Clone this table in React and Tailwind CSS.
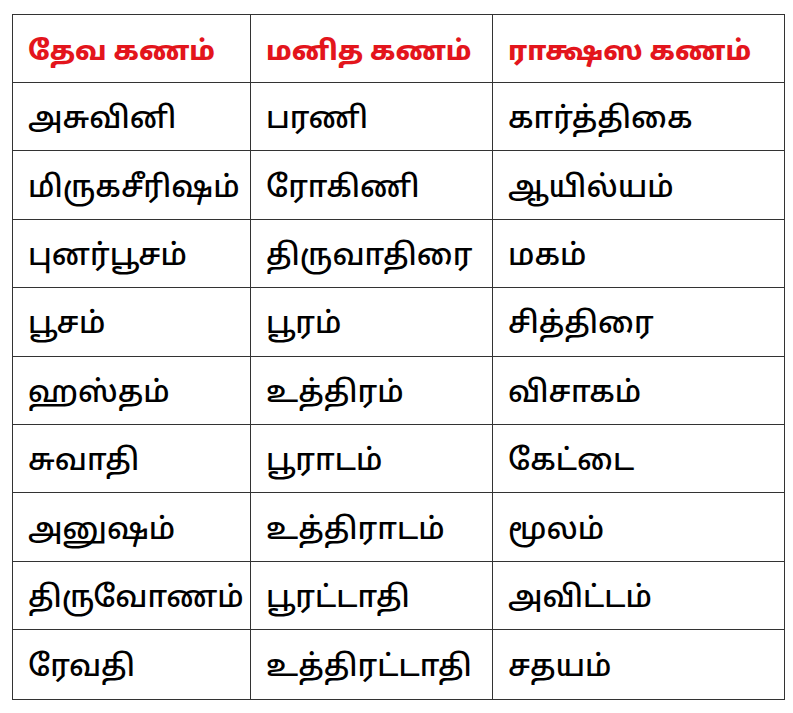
const header = ["தேவ கணம்", "மனித கணம்", "ராக்ஷஸ கணம்"];

const rows = [
  ["அசுவினி", "பரணி", "கார்த்திகை"],
  ["மிருகசீரிஷம்", "ரோகிணி", "ஆயில்யம்"],
  ["புனர்பூசம்", "திருவாதிரை", "மகம்"],
  ["பூசம்", "பூரம்", "சித்திரை"],
  ["ஹஸ்தம்", "உத்திரம்", "விசாகம்"],
  ["சுவாதி", "பூராடம்", "கேட்டை"],
  ["அனுஷம்", "உத்திராடம்", "மூலம்"],
  ["திருவோணம்", "பூரட்டாதி", "அவிட்டம்"],
  ["ரேவதி", "உத்திரட்டாதி", "சதயம்"],
];

export default function App() {
  return (
    <div
      lang="ta"
      className="h-[713px] w-[793px] bg-white pl-[12px] pt-[14px]"
      style={{ fontFamily: '"Noto Sans Tamil", "Lohit Tamil", "Noto Sans", "Liberation Sans", sans-serif' }}
    >
      <div className="grid w-[773px] grid-cols-[238px_242px_1fr] border-[1.5px] border-[#333]">
        {header.map((h, i) => (
          <div
            key={h}
            className={`flex h-[68px] items-center whitespace-nowrap border-b-[1.5px] border-[#333] pl-[15px] pt-[9px] text-[27px] leading-none font-extrabold text-[#e3151c] ${i < 2 ? "border-r-[1.5px]" : ""}`}
          >
            {h}
          </div>
        ))}
        {rows.map((row, r) =>
          row.map((cell, i) => (
            <div
              key={`${r}-${i}`}
              className={`flex h-[68.4px] items-center whitespace-nowrap border-[#333] pl-[15px] pt-[9px] text-[30px] leading-none font-medium text-black ${i < 2 ? "border-r-[1.5px]" : ""} ${r < rows.length - 1 ? "border-b-[1.5px]" : ""}`}
            >
              {cell}
            </div>
          ))
        )}
      </div>
    </div>
  );
}
